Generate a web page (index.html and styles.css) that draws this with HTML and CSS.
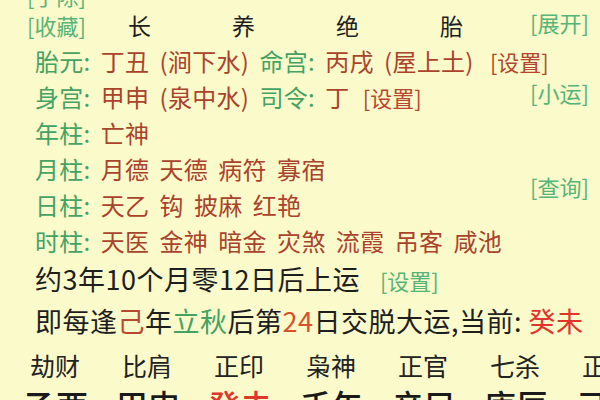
FILE: index.html
```html
<!DOCTYPE html>
<html lang="zh-CN">
<head>
<meta charset="utf-8">
<link rel="stylesheet" href="styles.css">
</head>
<body>
<div class="page">
  <div class="top">
    <div class="row r0"><span class="btn">[手除]</span></div>
    <div class="row r1"><span class="btn">[收藏]</span><span class="stage s1">长</span><span class="stage s2">养</span><span class="stage s3">绝</span><span class="stage s4">胎</span></div>
    <div class="side sd1"><span class="btn">[展开]</span></div>

    <div class="row info r2"><span class="lbl">胎元:</span> <span class="val">丁丑 (涧下水)</span> <span class="lbl">命宫:</span> <span class="val">丙戌 (屋上土)</span> <span class="set">[设置]</span></div>
    <div class="row info r3"><span class="lbl">身宫:</span> <span class="val">甲申 (泉中水)</span> <span class="lbl">司令:</span> <span class="val">丁</span> <span class="set">[设置]</span></div>
    <div class="side sd3"><span class="btn">[小运]</span></div>

    <div class="row info r4"><span class="lbl">年柱:</span> <span class="val">亡神</span></div>
    <div class="row info r5"><span class="lbl">月柱:</span> <span class="val">月德 天德 病符 寡宿</span></div>
    <div class="row info r6"><span class="lbl">日柱:</span> <span class="val">天乙 钩 披麻 红艳</span></div>
    <div class="side sd5"><span class="btn">[查询]</span></div>
    <div class="row info r7"><span class="lbl">时柱:</span> <span class="val">天医 金神 暗金 灾煞 流霞 吊客 咸池</span></div>
  </div>

  <div class="row info r8"><span class="dark">约3年10个月零12日后上运</span><span class="btn">[设置]</span></div>
  <div class="row info r9"><span class="dark">即每逢<span class="ji">己</span>年<span class="lq">立秋</span>后第<span class="num">24</span>日交脱大运,当前: </span><span class="cur">癸未</span></div>

  <div class="gods">
    <span>劫财</span><span>比肩</span><span>正印</span><span>枭神</span><span>正官</span><span>七杀</span><span>正财</span>
  </div>
  <div class="pillars">
    <span>乙酉</span><span>甲申</span><span class="cur">癸未</span><span>壬午</span><span>辛巳</span><span>庚辰</span><span>己卯</span>
  </div>
</div>
</body>
</html>
```
FILE: styles.css
```css
html, body {
  margin: 0;
  padding: 0;
  background: #fbfacb;
  width: 600px;
  height: 400px;
  overflow: hidden;
}
.page {
  font-family: "Noto Sans CJK SC", "Noto Sans", sans-serif;
  color: #222;
  width: 600px;
  height: 400px;
  overflow: hidden;
}
.top {
  display: grid;
  grid-template-columns: 530px 70px;
  grid-template-rows: 24px repeat(7, 36px);
  margin-top: -17px;
}
.row {
  white-space: pre;
  line-height: 36px;
}
.top .row { grid-column: 1; }
.r0 { grid-row: 1; padding-left: 27px; line-height: 24px; }
.r1 { grid-row: 2; padding-left: 27px; }
.r2 { grid-row: 3; }
.r3 { grid-row: 4; }
.r4 { grid-row: 5; }
.r5 { grid-row: 6; }
.r6 { grid-row: 7; }
.r7 { grid-row: 8; }
.side {
  grid-column: 2;
  display: flex;
  align-items: center;
  white-space: nowrap;
}
.sd1 { grid-row: 2; margin-top: -6px; }
.sd3 { grid-row: 4; margin-top: -10px; }
.sd5 { grid-row: 6 / 8; margin-top: -2px; }

.btn {
  font-size: 22px;
  color: #56b478;
}
.r1 .btn { margin-right: 42px; }
.stage {
  font-size: 23px;
  color: #1e1e1e;
  width: 104px;
  display: inline-block;
}
.info {
  padding-left: 35px;
  font-size: 24px;
  word-spacing: 4.5px;
  letter-spacing: 0.3px;
}
.lbl { color: #44a262; }
.val { color: #aa432c; }
.set { font-size: 22px; color: #b4472f; letter-spacing: 0; }
.r2 .set { margin-left: 6px; }
.r3 .set { margin-left: 3px; }
.r8 { line-height: 40px; height: 40px; font-size: 27px; letter-spacing: 0.5px; word-spacing: 0; }
.r8 .btn { margin-left: 20px; letter-spacing: 0; }
.r9 { line-height: 44px; height: 44px; font-size: 27px; letter-spacing: 0.5px; word-spacing: 0; }
.dark { color: #1e1e1e; }
.ji { color: #b5482f; }
.lq { color: #44a262; }
.num { color: #d9502c; }
.cur { color: #e0352b; }
.gods {
  display: grid;
  grid-template-columns: repeat(7, 92px);
  padding-left: 30px;
  height: 44px;
  align-items: center;
  font-size: 25px;
  color: #222;
  white-space: nowrap;
}
.pillars {
  display: grid;
  grid-template-columns: repeat(7, 92px);
  padding-left: 24px;
  font-size: 32px;
  font-weight: 500;
  line-height: 40px;
  color: #1a1a1a;
  white-space: nowrap;
  margin-top: -3px;
}
```
